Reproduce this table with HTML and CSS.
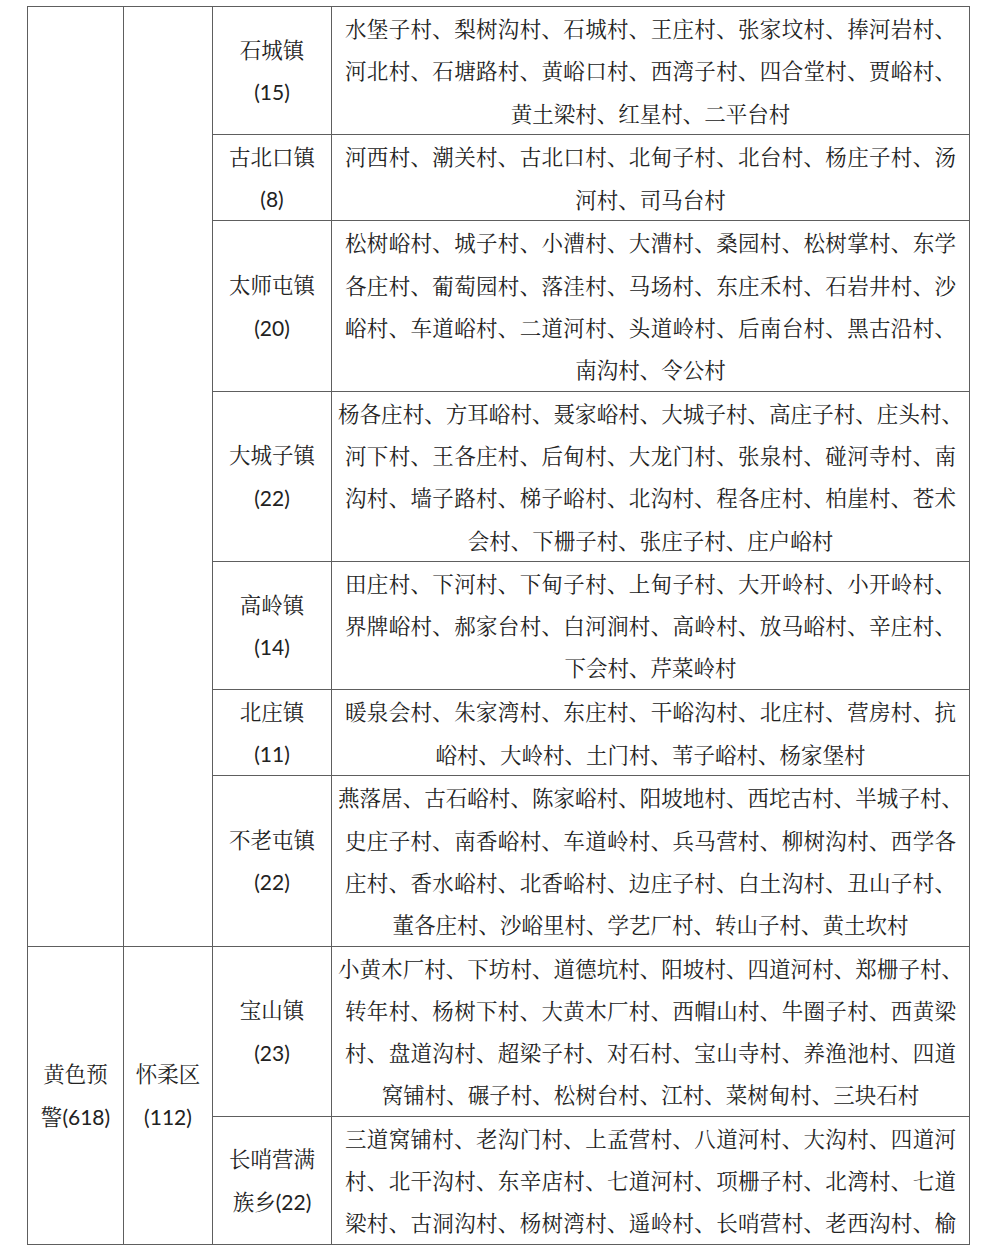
FILE: index.html
```html
<!DOCTYPE html>
<html lang="zh-CN">
<head>
<meta charset="utf-8">
<title>预警村庄列表</title>
<link rel="stylesheet" href="styles.css">
</head>
<body>
<table class="tbl">
  <colgroup>
    <col class="c1"><col class="c2"><col class="c3"><col class="c4">
  </colgroup>
  <tbody>
    <tr>
      <td class="side" rowspan="7"></td>
      <td class="side" rowspan="7"></td>
      <td class="town">石城镇<br><span class="num">(15)</span></td>
      <td class="vil">
        <div class="ln">水堡子村、梨树沟村、石城村、王庄村、张家坟村、捧河岩村、</div>
        <div class="ln">河北村、石塘路村、黄峪口村、西湾子村、四合堂村、贾峪村、</div>
        <div class="ln end">黄土梁村、红星村、二平台村</div>
      </td>
    </tr>
    <tr>
      <td class="town">古北口镇<br><span class="num">(8)</span></td>
      <td class="vil">
        <div class="ln">河西村、潮关村、古北口村、北甸子村、北台村、杨庄子村、汤</div>
        <div class="ln end">河村、司马台村</div>
      </td>
    </tr>
    <tr>
      <td class="town">太师屯镇<br><span class="num">(20)</span></td>
      <td class="vil">
        <div class="ln">松树峪村、城子村、小漕村、大漕村、桑园村、松树掌村、东学</div>
        <div class="ln">各庄村、葡萄园村、落洼村、马场村、东庄禾村、石岩井村、沙</div>
        <div class="ln">峪村、车道峪村、二道河村、头道岭村、后南台村、黑古沿村、</div>
        <div class="ln end">南沟村、令公村</div>
      </td>
    </tr>
    <tr>
      <td class="town">大城子镇<br><span class="num">(22)</span></td>
      <td class="vil">
        <div class="ln wide">杨各庄村、方耳峪村、聂家峪村、大城子村、高庄子村、庄头村、</div>
        <div class="ln">河下村、王各庄村、后甸村、大龙门村、张泉村、碰河寺村、南</div>
        <div class="ln">沟村、墙子路村、梯子峪村、北沟村、程各庄村、柏崖村、苍术</div>
        <div class="ln end">会村、下栅子村、张庄子村、庄户峪村</div>
      </td>
    </tr>
    <tr>
      <td class="town">高岭镇<br><span class="num">(14)</span></td>
      <td class="vil">
        <div class="ln">田庄村、下河村、下甸子村、上甸子村、大开岭村、小开岭村、</div>
        <div class="ln">界牌峪村、郝家台村、白河涧村、高岭村、放马峪村、辛庄村、</div>
        <div class="ln end">下会村、芹菜岭村</div>
      </td>
    </tr>
    <tr>
      <td class="town">北庄镇<br><span class="num">(11)</span></td>
      <td class="vil">
        <div class="ln">暖泉会村、朱家湾村、东庄村、干峪沟村、北庄村、营房村、抗</div>
        <div class="ln end">峪村、大岭村、土门村、苇子峪村、杨家堡村</div>
      </td>
    </tr>
    <tr>
      <td class="town">不老屯镇<br><span class="num">(22)</span></td>
      <td class="vil">
        <div class="ln wide">燕落居、古石峪村、陈家峪村、阳坡地村、西坨古村、半城子村、</div>
        <div class="ln">史庄子村、南香峪村、车道岭村、兵马营村、柳树沟村、西学各</div>
        <div class="ln">庄村、香水峪村、北香峪村、边庄子村、白土沟村、丑山子村、</div>
        <div class="ln end">董各庄村、沙峪里村、学艺厂村、转山子村、黄土坎村</div>
      </td>
    </tr>
    <tr>
      <td class="side" rowspan="2">黄色预<br>警<span class="num">(618)</span></td>
      <td class="side" rowspan="2">怀柔区<br><span class="num">(112)</span></td>
      <td class="town">宝山镇<br><span class="num">(23)</span></td>
      <td class="vil">
        <div class="ln wide">小黄木厂村、下坊村、道德坑村、阳坡村、四道河村、郑栅子村、</div>
        <div class="ln">转年村、杨树下村、大黄木厂村、西帽山村、牛圈子村、西黄梁</div>
        <div class="ln">村、盘道沟村、超梁子村、对石村、宝山寺村、养渔池村、四道</div>
        <div class="ln end">窝铺村、碾子村、松树台村、江村、菜树甸村、三块石村</div>
      </td>
    </tr>
    <tr>
      <td class="town">长哨营满<br>族乡<span class="num">(22)</span></td>
      <td class="vil">
        <div class="ln">三道窝铺村、老沟门村、上孟营村、八道河村、大沟村、四道河</div>
        <div class="ln">村、北干沟村、东辛店村、七道河村、项栅子村、北湾村、七道</div>
        <div class="ln">梁村、古洞沟村、杨树湾村、遥岭村、长哨营村、老西沟村、榆</div>
      </td>
    </tr>
  </tbody>
</table>
</body>
</html>
```

FILE: styles.css
```css
html, body {
  margin: 0;
  padding: 0;
  background: #ffffff;
}

body {
  font-family: "Noto Serif CJK SC", "Noto Sans CJK SC", sans-serif;
  font-size: 21.5px;
  color: #222222;
}

.tbl {
  margin: 6px 0 0 27px;
  border-collapse: collapse;
  table-layout: fixed;
  width: 942px;
}

.c1 { width: 96px; }
.c2 { width: 89px; }
.c3 { width: 119px; }
.c4 { width: 638px; }

.tbl td {
  border: 1px solid #5e5e5e;
  padding: 0;
  line-height: 42.3px;
  vertical-align: middle;
}

.side,
.town {
  text-align: center;
  white-space: nowrap;
}

.num {
  font-family: Lato, "Open Sans", sans-serif;
  font-size: 21px;
}

.vil {
  padding: 0 13px !important;
}

.ln {
  white-space: nowrap;
  text-align: justify;
  text-align-last: justify;
}

.ln.end {
  text-align: center;
  text-align-last: center;
}

.ln.wide {
  margin: 0 -7px;
}
```
